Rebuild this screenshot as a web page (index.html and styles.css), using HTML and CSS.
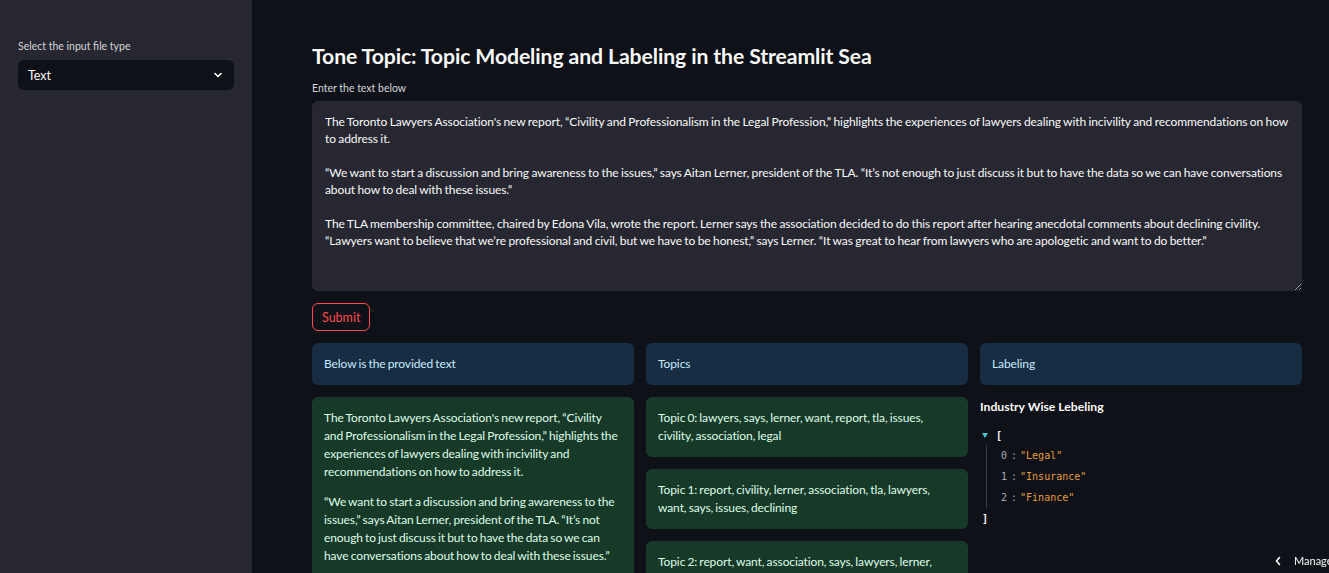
FILE: index.html
```html
<!DOCTYPE html>
<html lang="en">
<head>
<meta charset="utf-8">
<title>Tone Topic</title>
<link rel="stylesheet" href="styles.css">
</head>
<body>
<div class="app">
  <aside class="sidebar">
    <label class="field-label">Select the input file type</label>
    <div class="select">
      <span>Text</span>
      <svg class="chev" width="10" height="10" viewBox="0 0 10 10"><path d="M2 3.5 L5 6.5 L8 3.5" fill="none" stroke="#fafafa" stroke-width="1.6" stroke-linecap="round" stroke-linejoin="round"/></svg>
    </div>
  </aside>
  <main class="main">
    <h1 class="title">Tone Topic: Topic Modeling and Labeling in the Streamlit Sea</h1>
    <label class="field-label">Enter the text below</label>
    <textarea class="textbox">The Toronto Lawyers Association's new report, “Civility and Professionalism in the Legal Profession,” highlights the experiences of lawyers dealing with incivility and recommendations on how to address it.

“We want to start a discussion and bring awareness to the issues,” says Aitan Lerner, president of the TLA. “It’s not enough to just discuss it but to have the data so we can have conversations about how to deal with these issues.”

The TLA membership committee, chaired by Edona Vila, wrote the report. Lerner says the association decided to do this report after hearing anecdotal comments about declining civility. “Lawyers want to believe that we’re professional and civil, but we have to be honest,” says Lerner. “It was great to hear from lawyers who are apologetic and want to do better.”</textarea>
    <button class="submit">Submit</button>
    <div class="columns">
      <div class="col">
        <div class="alert info">Below is the provided text</div>
        <div class="alert success">
          <p>The Toronto Lawyers Association's new report, “Civility and Professionalism in the Legal Profession,” highlights the experiences of lawyers dealing with incivility and recommendations on how to address it.</p>
          <p>“We want to start a discussion and bring awareness to the issues,” says Aitan Lerner, president of the TLA. “It’s not enough to just discuss it but to have the data so we can have conversations about how to deal with these issues.”</p>
          <p>The TLA membership committee, chaired by Edona Vila, wrote the report.</p>
        </div>
      </div>
      <div class="col">
        <div class="alert info">Topics</div>
        <div class="alert success">Topic 0: lawyers, says, lerner, want, report, tla, issues, civility, association, legal</div>
        <div class="alert success">Topic 1: report, civility, lerner, association, tla, lawyers, want, says, issues, declining</div>
        <div class="alert success">Topic 2: report, want, association, says, lawyers, lerner, civility, tla, issues, legal</div>
      </div>
      <div class="col">
        <div class="alert info">Labeling</div>
        <div class="label-title">Industry Wise Lebeling</div>
        <div class="json">
          <div class="json-open"><span class="caret"></span><span class="br">[</span></div>
          <div class="json-body">
            <div class="json-row"><span class="key">0</span><span class="colon">:</span><span class="str">"Legal"</span></div>
            <div class="json-row"><span class="key">1</span><span class="colon">:</span><span class="str">"Insurance"</span></div>
            <div class="json-row"><span class="key">2</span><span class="colon">:</span><span class="str">"Finance"</span></div>
          </div>
          <div class="json-close"><span class="br">]</span></div>
        </div>
      </div>
    </div>
  </main>
</div>
<div class="manage">
  <svg width="8" height="10" viewBox="0 0 8 10"><path d="M5.5 1.5 L2.5 5 L5.5 8.5" fill="none" stroke="#fafafa" stroke-width="1.6" stroke-linecap="round" stroke-linejoin="round"/></svg>
  <span>Manage app</span>
</div>
</body>
</html>
```

FILE: styles.css
```css
* { box-sizing: border-box; }
html, body {
  margin: 0;
  height: 100%;
  overflow: hidden;
}
body {
  background: #0e1117;
  color: #fafafa;
  font-family: "Lato", "Noto Sans", sans-serif;
}
.app {
  display: flex;
  height: 100vh;
}
.sidebar {
  width: 252px;
  flex: none;
  background: #262730;
  padding: 40px 18px 0 18px;
  display: flex;
  flex-direction: column;
}
.field-label {
  display: block;
  font-size: 10.5px;
  color: #d5d6da;
  margin-bottom: 7px;
  line-height: 13px;
}
.main .field-label {
  margin-bottom: 6px;
}
.select {
  height: 30px;
  background: #0e1117;
  border-radius: 6px;
  display: flex;
  align-items: center;
  justify-content: space-between;
  padding: 0 11px 0 10px;
  font-size: 12.5px;
  color: #fafafa;
}
.main {
  flex: 1;
  padding: 42px 27px 0 60px;
  min-width: 0;
}
.title {
  margin: 0 0 12px 0;
  font-size: 21.2px;
  font-weight: 700;
  line-height: 28px;
  letter-spacing: -0.1px;
  color: #fafafa;
}
.textbox {
  display: block;
  width: 100%;
  height: 190px;
  background: #262730;
  border: none;
  border-radius: 6px;
  color: #fafafa;
  font-family: "Lato", "Noto Sans", sans-serif;
  font-size: 12px;
  letter-spacing: -0.1px;
  word-spacing: -0.5px;
  line-height: 17px;
  padding: 12px 13px;
  resize: vertical;
  outline: none;
  margin: 0;
}
.submit {
  margin-top: 12px;
  height: 28px;
  padding: 0 9px;
  background: transparent;
  border: 1px solid #ff4b4b;
  border-radius: 6px;
  color: #ff4b4b;
  font-family: "Lato", "Noto Sans", sans-serif;
  font-size: 12.5px;
  display: block;
}
.columns {
  display: flex;
  gap: 12px;
  margin-top: 12px;
}
.col {
  flex: 1;
  min-width: 0;
  display: flex;
  flex-direction: column;
  gap: 12px;
}
.alert {
  border-radius: 6px;
  padding: 12px 12px;
  font-size: 12px;
  letter-spacing: -0.1px;
  word-spacing: -0.8px;
  line-height: 18px;
}
.info {
  background: #172d43;
  color: #c7ebff;
  min-height: 42px;
}
.success {
  background: #173928;
  color: #dffde9;
}
.success p {
  margin: 0 0 12px 0;
}
.label-title {
  font-weight: 700;
  font-size: 12.2px;
  line-height: 16px;
  margin-top: 2px;
  color: #fafafa;
}
.json {
  font-family: "DejaVu Sans Mono", monospace;
  font-size: 10px;
  line-height: 21px;
  margin-top: -2px;
  color: #fafafa;
}
.json-open, .json-close {
  display: flex;
  align-items: center;
  height: 20px;
}
.caret {
  width: 0;
  height: 0;
  border-left: 3.5px solid transparent;
  border-right: 3.5px solid transparent;
  border-top: 5px solid #4fc4cf;
  margin: 0 8px 0 2px;
}
.json-open .br { font-weight: 700; }
.json-close .br { font-weight: 700; margin-left: 2px; }
.json-body {
  margin-left: 6px;
  border-left: 1px solid #3a3d47;
  padding-left: 14px;
}
.json-row {
  display: flex;
  height: 21px;
  align-items: center;
}
.key { color: #a6a8af; }
.colon { color: #a6a8af; margin: 0 3px 0 4px; }
.str { color: #e69c3e; }
.manage {
  position: fixed;
  right: -53px;
  bottom: 6px;
  display: flex;
  align-items: center;
  gap: 12px;
  font-size: 11px;
  color: #fafafa;
  width: 108px;
}
```
